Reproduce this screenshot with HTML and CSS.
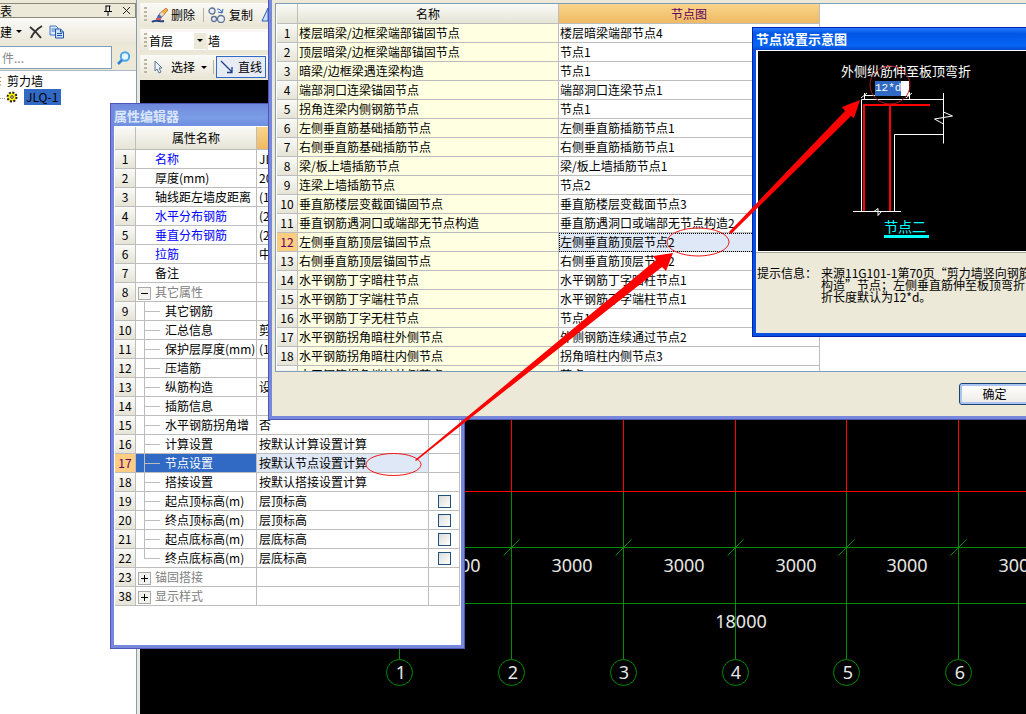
FILE: index.html
```html
<!DOCTYPE html>
<html lang="zh-CN">
<head>
<meta charset="utf-8">
<title>属性编辑器</title>
<link rel="stylesheet" href="styles.css">
</head>
<body>
<main class="app">
  <aside class="side">
    <header class="side-head">
      <h2>表</h2>
      <button class="plain" aria-label="固定"><svg width="10" height="11"><path d="M2.5 1h5M3 1v5M6.500 1v5M1 6.500h8M5 7v4" stroke="#000" fill="none"/></svg></button>
      <button class="plain" aria-label="关闭"><svg width="9" height="9"><path d="M1 1l7 7M8 1l-7 7" stroke="#222" fill="none"/></svg></button>
    </header>
    <div class="side-tools">
      <button class="plain">建<svg width="7" height="5"><path d="M0 1h6L3 4z"/></svg></button>
      <button class="plain" aria-label="删除构件"><svg width="14" height="14"><path d="M1 2c4 3 8 7 11 11M13 1C8 4 4 8 2 13" stroke="#333" stroke-width="2" fill="none"/></svg></button>
      <button class="plain" aria-label="复制构件"><svg width="16" height="14"><path d="M1 1h6l2 2v7H1z" fill="#dcecff" stroke="#3f74c4"/><path d="M2.500 4h4M2.500 6h4" stroke="#3f74c4"/><path d="M6.500 4h5l3 3v6h-8z" fill="#cfe3ff" stroke="#2456a8"/><path d="M11.500 4v3h3M8 8.500h5M8 10.500h5" stroke="#2456a8" fill="none"/></svg></button>
    </div>
    <div class="search">
      <input type="text" placeholder="件..." aria-label="搜索构件">
      <button class="plain" aria-label="搜索"><svg width="14" height="14"><circle cx="8" cy="5.500" r="4.200" fill="#e4f6ff" stroke="#4aa6e6" stroke-width="2"/><path d="M5 9l-4 4" stroke="#2c82d4" stroke-width="2.500"/></svg></button>
    </div>
    <ul class="tree">
      <li><svg width="2" height="10"><path d="M0 1.500h1M0 5.500h1M0 9h1" stroke="#d07020"/></svg><span>剪力墙</span></li>
      <li><svg width="18" height="14"><path d="M0 8.500h5" stroke="#999" stroke-dasharray="1 1"/><circle cx="12" cy="7" r="4.500" fill="#ffef00" stroke="#222" stroke-width="2" stroke-dasharray="2 1.500"/><circle cx="12" cy="7" r="1.300" fill="#fff" stroke="#333"/></svg><span class="picked">JLQ-1</span></li>
    </ul>
  </aside>

  <section class="work">
    <div class="toolbars">
      <div class="bar">
        <i class="grip"></i>
        <button class="tool"><svg width="17" height="15"><path d="M15 0l2 2-6 7-3-3z" fill="#f3b23c" stroke="#9a4b20" stroke-width=".6"/><path d="M11 4l2 2-3 3-2-2z" fill="#ddd"/><path d="M8 6l3 3c-1 3-3 4-6 3 1-2 1-4 3-6z" fill="#4a67b8"/><path d="M1 14c3-3 8 0 12-1" stroke="#26427f" stroke-width="2" fill="none"/><path d="M5 11h5" stroke="#d95a54" stroke-width="2"/></svg>删除</button>
        <i class="sep"></i>
        <button class="tool copy"><svg width="18" height="16"><g fill="#e9eef6" stroke="#60738f" stroke-width="1.300"><circle cx="4" cy="4" r="3"/><circle cx="6" cy="12" r="2.500"/><circle cx="13" cy="12" r="3.500"/></g><path d="M9 2c3 0 4 1 5 4M14 6l1-4M14 6l-4-1" stroke="#2f62c4" fill="none"/></svg>复制</button>
        <button class="tool mirror" aria-label="镜像"><svg width="18" height="16"><path d="M7 1v13H1zM10 1v13h6z" fill="#cfe0ff" stroke="#2d5dbb"/></svg></button>
      </div>
      <div class="bar selects">
        <i class="grip"></i>
        <label class="pick"><select aria-label="楼层"><option>首层</option></select><svg width="12" height="16"><path fill="#ece9d8" d="M0 0h12v16H0z"/><path d="M3 6h6l-3 3z"/></svg></label>
        <label class="pick wide"><select aria-label="构件类型"><option>墙</option></select></label>
      </div>
      <div class="bar">
        <i class="grip"></i>
        <button class="tool choose"><svg width="11" height="14"><path d="M1 1v10l2-2 2 4 2-1-2-4h3z" fill="#eef5ff" stroke="#5a7599"/></svg>选择<svg width="7" height="5"><path d="M0 1h6L3 4z"/></svg></button>
        <i class="sep near"></i>
        <button class="tool line"><svg width="14" height="14"><path d="M1 1l11 11M12 7v5.500H7" stroke="#1d3f86" stroke-width="1.300" fill="none"/></svg>直线</button>
      </div>
    </div>
    <svg class="canvas" aria-label="轴网">
      <g transform="translate(-140 -80)" fill="none" stroke-width="1">
        <path stroke="#f00" d="M140 491.500H3000M399.500 80V491M511.500 80V491M623.500 80V491M735.500 80V491M846.500 80V491M958.500 80V491"/>
        <path stroke="#008c00" d="M140 547.500H3000M140 603.500H3000M399.500 492V659M511.500 492V659M623.500 492V659M735.500 492V659M846.500 492V659M958.500 492V659M503.500 555.500l16-16M615.500 555.500l16-16M727.500 555.500l16-16M838.500 555.500l16-16M950.500 555.500l16-16"/>
        <g stroke="#008c00"><circle cx="399.500" cy="672.500" r="13"/><circle cx="511.500" cy="672.500" r="13"/><circle cx="623.500" cy="672.500" r="13"/><circle cx="735.500" cy="672.500" r="13"/><circle cx="846.500" cy="672.500" r="13"/><circle cx="958.500" cy="672.500" r="13"/></g>
      </g>
      <g class="dims" transform="translate(-140 -80)">
        <text x="460" y="572">3000</text><text x="572" y="572">3000</text><text x="684" y="572">3000</text><text x="796" y="572">3000</text><text x="907" y="572">3000</text><text x="1019" y="572">3000</text>
        <text x="741" y="628">18000</text>
        <text x="401" y="679">1</text><text x="513" y="679">2</text><text x="624" y="679">3</text><text x="736" y="679">4</text><text x="848" y="679">5</text><text x="960" y="679">6</text>
      </g>
    </svg>
  </section>

  <section class="window props">
    <h1>属性编辑器</h1>
    <div class="pane">
      <table class="grid">
        <colgroup><col class="c-num"><col class="c-prop"><col class="c-val"><col class="c-add"></colgroup>
        <thead><tr><th></th><th>属性名称</th><th class="hot"></th><th></th></tr></thead>
        <tbody>
          <tr><th>1</th><td class="top blue">名称</td><td>JLQ-1</td><td></td></tr>
          <tr><th>2</th><td class="top">厚度(mm)</td><td>200</td><td></td></tr>
          <tr><th>3</th><td class="top">轴线距左墙皮距离</td><td>(1</td><td></td></tr>
          <tr><th>4</th><td class="top blue">水平分布钢筋</td><td>(2</td><td></td></tr>
          <tr><th>5</th><td class="top blue">垂直分布钢筋</td><td>(2</td><td></td></tr>
          <tr><th>6</th><td class="top blue">拉筋</td><td>中</td><td></td></tr>
          <tr><th>7</th><td class="top">备注</td><td></td><td></td></tr>
          <tr><th>8</th><td class="group"><button class="fold" aria-label="收起"><svg width="11" height="11"><path d="M2 5.500h7" stroke="#000"/></svg></button>其它属性</td><td></td><td></td></tr>
          <tr><th>9</th><td class="sub">其它钢筋</td><td></td><td></td></tr>
          <tr><th>10</th><td class="sub">汇总信息</td><td>剪</td><td></td></tr>
          <tr><th>11</th><td class="sub">保护层厚度(mm)</td><td>(1</td><td></td></tr>
          <tr><th>12</th><td class="sub">压墙筋</td><td></td><td></td></tr>
          <tr><th>13</th><td class="sub">纵筋构造</td><td>设</td><td></td></tr>
          <tr><th>14</th><td class="sub">插筋信息</td><td></td><td></td></tr>
          <tr><th>15</th><td class="sub">水平钢筋拐角增</td><td>否</td><td></td></tr>
          <tr><th>16</th><td class="sub">计算设置</td><td>按默认计算设置计算</td><td></td></tr>
          <tr class="current"><th>17</th><td class="sub">节点设置</td><td>按默认节点设置计算</td><td></td></tr>
          <tr><th>18</th><td class="sub">搭接设置</td><td>按默认搭接设置计算</td><td></td></tr>
          <tr><th>19</th><td class="sub">起点顶标高(m)</td><td>层顶标高</td><td><input type="checkbox" aria-label="起点顶标高"></td></tr>
          <tr><th>20</th><td class="sub">终点顶标高(m)</td><td>层顶标高</td><td><input type="checkbox" aria-label="终点顶标高"></td></tr>
          <tr><th>21</th><td class="sub">起点底标高(m)</td><td>层底标高</td><td><input type="checkbox" aria-label="起点底标高"></td></tr>
          <tr><th>22</th><td class="sub last">终点底标高(m)</td><td>层底标高</td><td><input type="checkbox" aria-label="终点底标高"></td></tr>
          <tr><th>23</th><td class="group"><button class="fold" aria-label="展开"><svg width="11" height="11"><path d="M2 5.500h7M5.500 2v7" stroke="#000"/></svg></button>锚固搭接</td><td></td><td></td></tr>
          <tr><th>38</th><td class="group"><button class="fold" aria-label="展开"><svg width="11" height="11"><path d="M2 5.500h7M5.500 2v7" stroke="#000"/></svg></button>显示样式</td><td></td><td></td></tr>
        </tbody>
      </table>
    </div>
  </section>

  <section class="window nodes">
    <div class="pane">
      <table class="grid">
        <colgroup><col class="c-num"><col class="c-node"><col class="c-node"></colgroup>
        <thead><tr><th></th><th>名称</th><th class="hot">节点图</th></tr></thead>
        <tbody>
          <tr><th>1</th><td>楼层暗梁/边框梁端部锚固节点</td><td>楼层暗梁端部节点4</td></tr>
          <tr><th>2</th><td>顶层暗梁/边框梁端部锚固节点</td><td>节点1</td></tr>
          <tr><th>3</th><td>暗梁/边框梁遇连梁构造</td><td>节点1</td></tr>
          <tr><th>4</th><td>端部洞口连梁锚固节点</td><td>端部洞口连梁节点1</td></tr>
          <tr><th>5</th><td>拐角连梁内侧钢筋节点</td><td>节点1</td></tr>
          <tr><th>6</th><td>左侧垂直筋基础插筋节点</td><td>左侧垂直筋插筋节点1</td></tr>
          <tr><th>7</th><td>右侧垂直筋基础插筋节点</td><td>右侧垂直筋插筋节点1</td></tr>
          <tr><th>8</th><td>梁/板上墙插筋节点</td><td>梁/板上墙插筋节点1</td></tr>
          <tr><th>9</th><td>连梁上墙插筋节点</td><td>节点2</td></tr>
          <tr><th>10</th><td>垂直筋楼层变截面锚固节点</td><td>垂直筋楼层变截面节点3</td></tr>
          <tr><th>11</th><td>垂直钢筋遇洞口或端部无节点构造</td><td>垂直筋遇洞口或端部无节点构造2</td></tr>
          <tr class="focus"><th>12</th><td>左侧垂直筋顶层锚固节点</td><td>左侧垂直筋顶层节点2</td></tr>
          <tr><th>13</th><td>右侧垂直筋顶层锚固节点</td><td>右侧垂直筋顶层节点2</td></tr>
          <tr><th>14</th><td>水平钢筋丁字暗柱节点</td><td>水平钢筋丁字暗柱节点1</td></tr>
          <tr><th>15</th><td>水平钢筋丁字端柱节点</td><td>水平钢筋丁字端柱节点1</td></tr>
          <tr><th>16</th><td>水平钢筋丁字无柱节点</td><td>节点1</td></tr>
          <tr><th>17</th><td>水平钢筋拐角暗柱外侧节点</td><td>外侧钢筋连续通过节点2</td></tr>
          <tr><th>18</th><td>水平钢筋拐角暗柱内侧节点</td><td>拐角暗柱内侧节点3</td></tr>
          <tr><th></th><td>水平钢筋拐角端柱外侧节点</td><td>节点3</td></tr>
        </tbody>
      </table>
    </div>
    <footer><button class="ok">确定</button></footer>
  </section>

  <section class="sketch">
    <h1>节点设置示意图</h1>
    <div class="drawing">
      <svg class="figure" aria-label="节点二">
        <g transform="translate(-758 -51)" fill="none">
          <text x="841" y="76" class="note">外侧纵筋伸至板顶弯折</text>
          <path stroke="#fff" d="M861.500 211V99.500H943.500M943.500 93V143.500M894.500 211V134.500H943.500M853 211.500H901M864.500 93v6M864 95.500H909M909.500 92v7M861 98l6-5M906 98l6-5M943.500 112l9 4-18 3 9 5M874 211.500l4-3v7l3-3.500"/>
          <path stroke="#f00" stroke-width="2" d="M864 211V105H930M890 105V211"/>
          <text x="884" y="232" class="name">节点二</text>
          <path stroke="#0ff" stroke-width="3" d="M884 236.500H929"/>
        </g>
      </svg>
      <input class="len" type="text" value="12*d" aria-label="弯折长度">
    </div>
    <dl class="hint"><dt>提示信息：</dt><dd>来源11G101-1第70页“剪力墙竖向钢筋<br>构造”节点；左侧垂直筋伸至板顶弯折<br>折长度默认为12*d。</dd></dl>
  </section>

  <svg class="marks" aria-hidden="true">
    <g fill="none" stroke="#f01818"><ellipse cx="393.500" cy="464.500" rx="27.500" ry="11"/><ellipse cx="698" cy="242" rx="31" ry="14"/><ellipse cx="890" cy="85" rx="20" ry="19" stroke="#b01818"/></g>
    <path fill="#f00" d="M415 460L656 260 653 256 673 253 666 271 662 267 416 461zM729 232L845 111 842 107 860 100 854 118 851 116 731 234z"/>
  </svg>
</main>
</body>
</html>
```
FILE: styles.css
```css
* { box-sizing: border-box; }
html, body { height: 100%; margin: 0; }
body {
  overflow: hidden;
  font: 12px/18px "Noto Sans CJK SC", sans-serif;
  color: #000;
}
button, input, select { font: inherit; color: inherit; }
h1, h2, ul, dl, dd { margin: 0; padding: 0; }
svg { display: block; flex: none; }

.app {
  position: relative;
  display: grid;
  grid-template-columns: 137px 1fr;
  height: 100%;
  overflow: hidden;
  background: #ece9d8;
}
.plain {
  display: flex;
  align-items: center;
  gap: 4px;
  padding: 0;
  border: 0;
  background: none;
}

/* component list */
.side { display: flex; flex-direction: column; border-right: 1px solid #7f9db9; }
.side-head {
  display: flex;
  align-items: center;
  gap: 9px;
  height: 15px;
  margin-top: 3px;
  padding-right: 4px;
  border: 1px solid #8a8878;
  border-left: 0;
}
.side-head h2 { flex: 1; font-size: 12px; font-weight: 400; }
.side-tools {
  display: flex;
  align-items: center;
  gap: 6px;
  height: 27px;
  background: linear-gradient(#fbfaf7, #e9e6d6);
}
.search { display: flex; height: 26px; padding: 1px 0; border-bottom: 1px solid #a9b8c4; }
.search input {
  flex: 1;
  min-width: 0;
  padding: 0 2px;
  border: 1px solid #7f9db9;
  border-left: 0;
  background: #fff;
}
.search input::placeholder { color: #888; opacity: 1; }
.search .plain { width: 24px; justify-content: center; }
.tree { flex: 1; padding-top: 2px; background: #fff; list-style: none; }
.tree li { display: flex; align-items: center; gap: 5px; height: 16px; line-height: 16px; }
.picked { padding: 0 3px 0 2px; margin-left: 1px; background: #316ac5; }

/* toolbars and drawing area */
.work { display: flex; flex-direction: column; min-width: 0; padding-left: 3px; }
.toolbars { display: flex; flex-direction: column; gap: 2px; height: 80px; padding-top: 3px; }
.bar {
  display: flex;
  align-items: center;
  height: 24px;
  padding-left: 4px;
  background: linear-gradient(#fbfaf7, #e9e6d6);
}
.grip { width: 3px; height: 16px; background: repeating-linear-gradient(#b9b6a4 0 2px, transparent 2px 4px); }
.sep { width: 1px; height: 14px; margin-left: 8px; background: #b5b2a0; }
.sep.near { margin-left: 5px; }
.tool {
  display: flex;
  align-items: center;
  gap: 3px;
  padding: 0 0 0 4px;
  border: 0;
  background: none;
}
.mirror { padding-left: 8px; }
.choose { gap: 6px; padding-left: 7px; }
.line { gap: 4px; height: 22px; margin-left: 2px; padding: 0 3px; border: 1px solid #316ac5; background: #e6ebf5; }
.pick { display: flex; align-items: center; width: 57px; height: 18px; margin-left: 2px; background: #fff; }
.pick.wide { flex: 1; }
.pick select { flex: 1; min-width: 0; height: 18px; padding: 0 0 2px; border: 0; background: none; appearance: none; }
.canvas { flex: 1; width: 100%; min-height: 0; background: #000; }
.dims { font: 18px "Noto Sans", sans-serif; fill: #e6e6e6; text-anchor: middle; }

/* windows */
.window { position: absolute; border: 4px solid #7687dc; outline: 1px solid #4c58b8; outline-offset: -1px; }
.props { left: 110px; top: 103px; width: 355px; height: 546px; display: flex; flex-direction: column; }
.props h1 {
  height: 22px;
  margin-top: -3px;
  font-size: 13px;
  line-height: 23px;
  color: #dbe6fa;
  background: linear-gradient(#6f88dc, #7b9de6 60%, #6f8ee0);
}
.pane { background: #fff; overflow: hidden; }
.props .pane { flex: 1; padding: 1px 0 0 1px; }
.nodes {
  left: 268px;
  right: -40px;
  top: -22px;
  height: 442px;
  display: flex;
  flex-direction: column;
  padding: 21px 0 0 3px;
  background: #ece9d8;
}
.nodes .pane { flex: none; height: 369px; padding-left: 1px; border: 1px solid #7f9db9; }
.nodes footer { flex: 1; display: flex; justify-content: flex-end; align-items: center; padding-right: 32px; }
.ok {
  width: 71px;
  height: 22px;
  padding: 0;
  border: 1px solid #1c4070;
  border-radius: 3px;
  background: linear-gradient(#fff, #ecebe5);
  box-shadow: inset 0 0 0 2px #a9c4f0;
}

/* grids */
.grid { table-layout: fixed; border-collapse: separate; border-spacing: 0; }
.props .grid { width: 345px; }
.nodes .grid { width: 543px; }
.c-num { width: 21px; }
.c-prop { width: 121px; }
.c-val { width: 172px; }
.c-add { width: 31px; }
.c-node { width: 261px; }
.grid th, .grid td {
  height: 19px;
  padding: 0;
  border: solid #bdbdbd;
  border-width: 0 1px 1px 0;
  overflow: hidden;
  white-space: nowrap;
  line-height: 18px;
  font-weight: 400;
}
.grid th { background: linear-gradient(#fafaf7, #e6e4d6); }
.props thead th { height: 23px; }
.nodes thead th { height: 20px; }
.grid td { padding-left: 2px; text-align: left; }
.nodes td { padding-left: 1px; }
.grid .hot { background: linear-gradient(#f9d48c, #efba62); color: #600060; }
.nodes td:nth-child(2) { background: #ffffe1; }
.props .top { padding-left: 19px; }
.blue { color: #00f; }
.props .group { color: #808080; }
.fold {
  display: inline-block;
  width: 13px;
  height: 13px;
  margin-right: 4px;
  padding: 0;
  border: 1px solid #aaa;
  background: #f2f2ee;
  vertical-align: -2px;
}
.props .sub {
  padding-left: 29px;
  background: linear-gradient(#bdbdbd, #bdbdbd) 8px 0 / 1px 100% no-repeat,
    linear-gradient(#bdbdbd, #bdbdbd) 9px 9px / 15px 1px no-repeat;
}
.props .last { background-size: 1px 10px, 15px 1px; }
.grid .current th, .grid .focus th { background: #ffcd82; color: #600060; }
.props .current .sub { background-color: #316ac5; color: #fff; }
.current td:nth-child(3) { background: #dfe8f6; }
.focus td:nth-child(3) { background: #dfe8f6; outline: 1px dotted #000; outline-offset: -1px; }
.grid input {
  display: block;
  width: 13px;
  height: 13px;
  margin: 0 0 0 7px;
  border: 1px solid #1c5180;
  background: linear-gradient(135deg, #dcdcd7, #fff);
  appearance: none;
}

/* node sketch window */
.sketch {
  position: absolute;
  left: 752px;
  right: -40px;
  top: 27px;
  border: 4px solid #0a50e0;
  border-top: 0;
  outline: 1px solid #0022b0;
  outline-offset: -1px;
  background: #ece9d8;
}
.sketch h1 {
  height: 23px;
  margin: 0 -4px;
  padding-left: 4px;
  font-size: 13px;
  line-height: 24px;
  color: #fff;
  background: linear-gradient(#2c80ff, #0055e5 30%, #0666f5 80%, #0048d0);
}
.drawing { position: relative; border: solid #fff; border-width: 1px 0 1px 2px; background: #000; }
.figure { width: 100%; height: 200px; }
.note { font-size: 13px; fill: #fff; }
.name { font-size: 14px; fill: #0ff; }
.len {
  position: absolute;
  left: 117px;
  top: 30px;
  width: 34px;
  height: 15px;
  padding: 0;
  border: 0;
  font: 11px/15px "Liberation Mono", monospace;
  color: #fff;
  background: linear-gradient(90deg, #316ac5 26px, #fff 26px);
}
.hint { display: flex; gap: 4px; height: 81px; padding: 14px 0 0 1px; border-top: 1px solid #aca899; line-height: 12px; white-space: nowrap; }
.hint dt { width: 60px; flex: none; }

.marks { position: absolute; left: 0; top: 0; width: 100%; height: 100%; pointer-events: none; }
```
